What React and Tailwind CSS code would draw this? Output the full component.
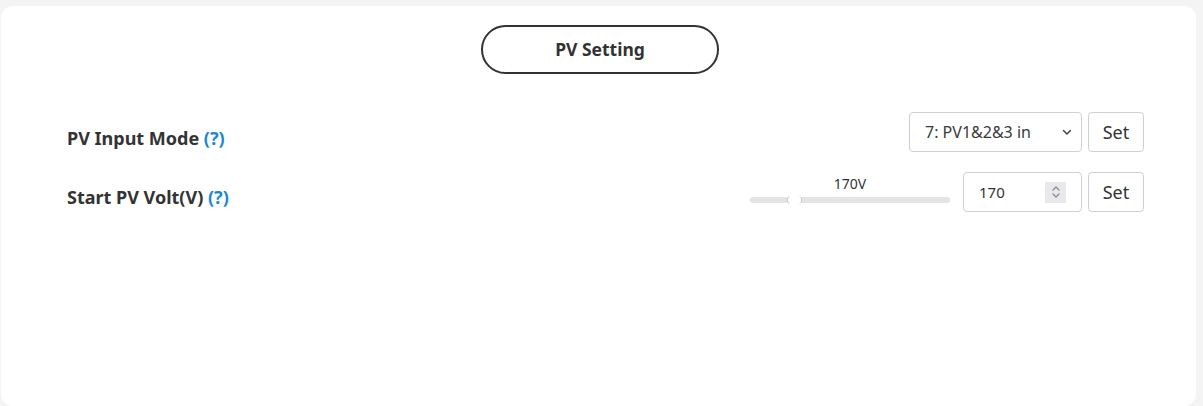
import React from "react";

function Chevron() {
  return (
    <svg width="12" height="12" viewBox="0 0 12 12" fill="none" className="text-[#444]">
      <path d="M2.5 4.5 L6 8 L9.5 4.5" stroke="currentColor" strokeWidth="1.5" strokeLinecap="round" strokeLinejoin="round" />
    </svg>
  );
}

function Spinner() {
  return (
    <div className="flex h-[21px] w-[21px] flex-col items-center justify-center bg-[#e9e9ed]">
      <svg width="10" height="16" viewBox="0 0 10 16" fill="none">
        <path d="M2 6 L5 3 L8 6" stroke="#888" strokeWidth="1.2" strokeLinecap="round" strokeLinejoin="round" />
        <path d="M2 10 L5 13 L8 10" stroke="#888" strokeWidth="1.2" strokeLinecap="round" strokeLinejoin="round" />
      </svg>
    </div>
  );
}

function SetButton() {
  return (
    <button className="flex h-[40px] w-[56px] items-center justify-center rounded-[4px] border border-[#cfcfcf] bg-white text-[18px] text-[#333]">
      Set
    </button>
  );
}

export default function App() {
  return (
    <div
      className="min-h-[406px] bg-[#f4f4f4] pl-[1px] pr-[7px] pt-[6px]"
      style={{ fontFamily: '"Noto Sans", "Open Sans", sans-serif' }}
    >
      <div className="h-[400px] rounded-[12px] bg-white">
        <div className="flex justify-center pt-[19px] pl-[3px]">
          <div className="flex h-[49px] w-[238px] items-center justify-center rounded-full border-2 border-[#333] text-[17.5px] font-bold text-[#333]">
            PV Setting
          </div>
        </div>

        <div className="flex flex-col gap-[20px] pl-[66px] pr-[52px] pt-[38px]">
          <div className="flex h-[40px] items-center justify-between">
            <div className="mt-[13px] text-[18px] font-bold text-[#333]">
              PV Input Mode <span className="text-[#1a88d4]">(?)</span>
            </div>
            <div className="flex items-center gap-[6px]">
              <div className="flex h-[40px] w-[173px] items-center rounded-[4px] border border-[#cfcfcf] bg-white pl-[15px] pr-[8px] text-[16px] text-[#3a3a3a]">
                <span className="w-[137px]">7: PV1&amp;2&amp;3 in</span>
                <Chevron />
              </div>
              <SetButton />
            </div>
          </div>

          <div className="flex h-[40px] items-center justify-between">
            <div className="mt-[11px] text-[18px] font-bold text-[#333]">
              Start PV Volt(V) <span className="text-[#1a88d4]">(?)</span>
            </div>
            <div className="flex items-center gap-[6px]">
              <div className="mb-[6px] mr-[7px] flex w-[200px] flex-col items-center">
                <div className="text-[14px] leading-[18px] text-[#333]">170V</div>
                <div className="relative mt-[4px] h-[6px] w-full rounded-full bg-[#e4e4e4]">
                  <div className="absolute left-[37px] top-[-1px] h-[8px] w-[15px] rounded-[4px] border-x border-[#c8c8c8] bg-white" />
                </div>
              </div>
              <div className="flex h-[40px] w-[119px] items-center justify-between rounded-[4px] border border-[#cfcfcf] bg-white pl-[15px] pr-[15px] text-[15px] text-[#333]">
                <span>170</span>
                <Spinner />
              </div>
              <SetButton />
            </div>
          </div>
        </div>
      </div>
    </div>
  );
}
